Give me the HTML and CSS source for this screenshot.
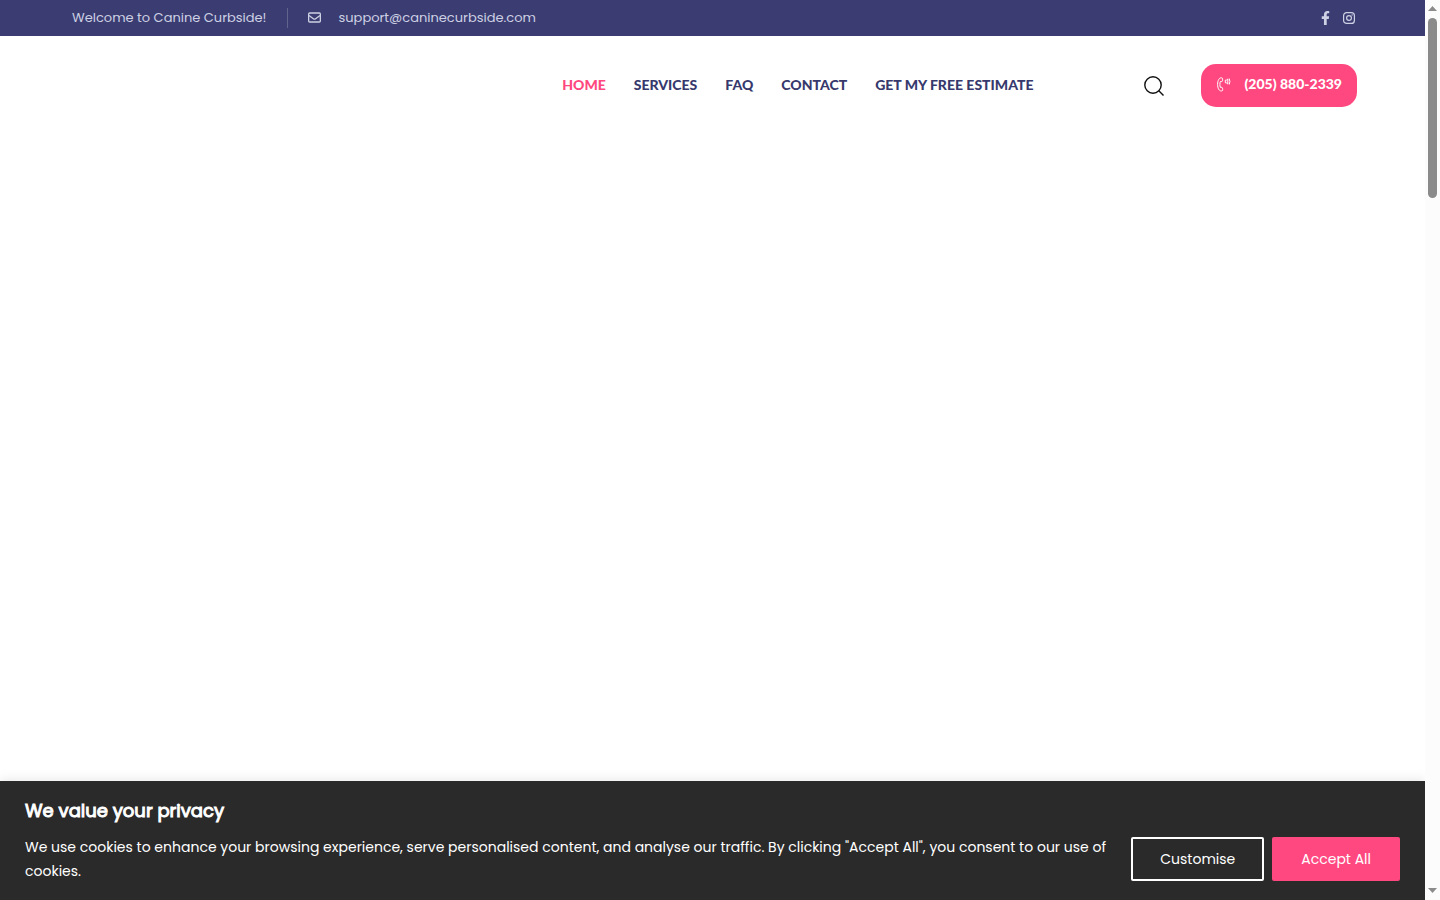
FILE: index.html
```html
<!DOCTYPE html>
<html lang="en">
<head>
    <meta charset="UTF-8">
    <meta name="viewport" content="width=device-width, initial-scale=1.0">
    <title>Canine Curbside</title>
    <link rel="stylesheet" href="styles.css">
</head>
<body>
    <div class="page">
        <div class="topbar">
            <span class="welcome">Welcome to Canine Curbside!</span>
            <a class="email" href="mailto:support@caninecurbside.com">
                <svg width="13" height="12" viewBox="0 0 13 12" fill="none" stroke="currentColor" stroke-width="1.3">
                    <rect x=".65" y="1" width="11.7" height="9" rx="1"/>
                    <path d="M1 3.500l4.400 3.300q1.100.8 2.200 0L12 3.500"/>
                </svg>
                support@caninecurbside.com
            </a>
            <div class="social">
                <a href="#" aria-label="Facebook">
                    <svg width="9" height="14" viewBox="0 0 320 512" fill="currentColor"><path d="M279 288l14-93h-89v-60c0-25 12-50 52-50h41V7S260 0 225 0c-73 0-121 44-121 125v70H23v93h81v224h100V288z"/></svg>
                </a>
                <a href="#" aria-label="Instagram">
                    <svg width="12" height="12" viewBox="0 0 12 12" fill="none" stroke="currentColor" stroke-width="1.2">
                        <rect x=".6" y=".6" width="10.8" height="10.8" rx="3"/>
                        <circle cx="6" cy="6" r="2.4"/>
                        <circle cx="9.1" cy="2.9" r=".7" fill="currentColor" stroke="none"/>
                    </svg>
                </a>
            </div>
        </div>

        <header class="header">
            <nav class="nav">
                <a class="active" href="#">HOME</a>
                <a href="#">SERVICES</a>
                <a href="#">FAQ</a>
                <a href="#">CONTACT</a>
                <a href="#">GET MY FREE ESTIMATE</a>
            </nav>
            <button class="search" type="button" aria-label="Search">
                <svg width="20" height="20" viewBox="0 0 20 20" fill="none" stroke="currentColor" stroke-width="1.4">
                    <circle cx="9" cy="9" r="8.2"/>
                    <path d="M14.8 14.8l4.700 4.700"/>
                </svg>
            </button>
            <a class="phone" href="tel:+12058802339">
                <svg width="14" height="15" viewBox="0 0 14 15" fill="none" stroke="currentColor" stroke-width="1">
                    <path d="M4.500.8C2.200.6.6 3.500.6 7.400c0 3.900 1.600 6.800 4 6.600.8-.1 1.200-.6 1.100-1.300l-.2-1.500c-.1-.7-.6-1-1.200-.9l-.9.1c-.7-1.700-.7-4.200 0-5.900l.9.1c.6.1 1.100-.2 1.200-.9l.1-1.500C5.700 1.400 5.300.9 4.500.8z"/>
                    <path d="M8.300 3.200h1l1.500-1.200v5L9.300 5.800h-1zM12.200 1.500q1.400 3 0 6"/>
                </svg>
                (205) 880-2339
            </a>
        </header>

        <main class="content"></main>

        <section class="cookies">
            <h2>We value your privacy</h2>
            <div class="cookies-row">
                <p>We use cookies to enhance your browsing experience, serve personalised content, and analyse our traffic. By clicking "Accept All", you consent to our use of cookies.</p>
                <div class="cookies-buttons">
                    <button class="customise" type="button">Customise</button>
                    <button class="accept" type="button">Accept All</button>
                </div>
            </div>
        </section>
    </div>

    <div class="scrollbar">
        <svg width="9" height="5" viewBox="0 0 9 5"><path d="M0 5L4.500 0 9 5z" fill="currentColor"/></svg>
        <div class="track"><div class="thumb"></div></div>
        <svg width="9" height="5" viewBox="0 0 9 5"><path d="M0 0l4.500 5L9 0z" fill="currentColor"/></svg>
    </div>
</body>
</html>
```
FILE: styles.css
```css
* {
    box-sizing: border-box;
}

body {
    margin: 0;
    display: flex;
    height: 100vh;
    overflow: hidden;
    background-color: #fff;
    font-family: Poppins, Inter, sans-serif;
    font-size: 14px;
}

a {
    color: inherit;
    text-decoration: none;
}

svg {
    display: block;
    flex: none;
}

button {
    font-family: inherit;
    cursor: pointer;
}

.page {
    flex: 1;
    min-width: 0;
    display: flex;
    flex-direction: column;
}

.topbar {
    display: flex;
    align-items: center;
    min-height: 36px;
    padding: 0 70px 0 72px;
    background-color: #3b3d72;
    color: #ced0e4;
    font-size: 13px;
    line-height: 20px;
}

.welcome {
    padding-right: 20px;
    border-right: 1px solid #62648e;
}

.email {
    display: flex;
    align-items: center;
    gap: 18px;
    padding-left: 20px;
}

.social {
    display: flex;
    align-items: center;
    gap: 13px;
    margin-left: auto;
}

.header {
    display: flex;
    align-items: center;
    justify-content: flex-end;
    padding: 28px 68px;
}

.nav {
    display: flex;
    gap: 28px;
    margin-right: 111px;
    padding-bottom: 2px;
    color: #37396d;
    font-family: Lato, sans-serif;
    font-weight: 900;
    line-height: 20px;
}

.nav .active {
    color: #ff4880;
}

.search {
    margin-right: 37px;
    padding: 0;
    border: none;
    background: none;
    color: #111;
}

.phone {
    display: flex;
    align-items: center;
    gap: 13px;
    padding: 10px 15px 13px 16px;
    border-radius: 15px;
    background-color: #ff4880;
    color: #fff;
    font-family: Lato, sans-serif;
    font-weight: 900;
    line-height: 20px;
}

.content {
    flex: 1;
}

.cookies {
    padding: 18px 25px 17px;
    background-color: #2a2a2a;
    box-shadow: 0 -1px 10px rgba(172, 171, 171, 0.3);
    color: #fff;
}

.cookies h2 {
    margin: 0 0 12px;
    font-size: 18px;
    font-weight: 400;
    line-height: 24px;
    -webkit-text-stroke: 1px currentColor;
}

.cookies-row {
    display: flex;
    align-items: center;
    gap: 24px;
}

.cookies p {
    flex: 1;
    margin: 0;
    line-height: 24px;
}

.cookies-buttons {
    display: flex;
    gap: 8px;
}

.cookies-buttons button {
    height: 44px;
    padding: 0 27px;
    border: 2px solid #fff;
    border-radius: 2px;
    background: none;
    color: #fff;
    font-size: 14px;
}

.cookies-buttons .accept {
    border-color: #ff4880;
    background-color: #ff4880;
}

.scrollbar {
    display: flex;
    flex-direction: column;
    align-items: center;
    gap: 7px;
    width: 15px;
    padding: 6px 0 7px;
    background-color: #fcfcfc;
    color: #8b8b8b;
}

.track {
    flex: 1;
    width: 9px;
}

.thumb {
    height: 180px;
    border-radius: 5px;
    background-color: #8b8b8b;
}
```
